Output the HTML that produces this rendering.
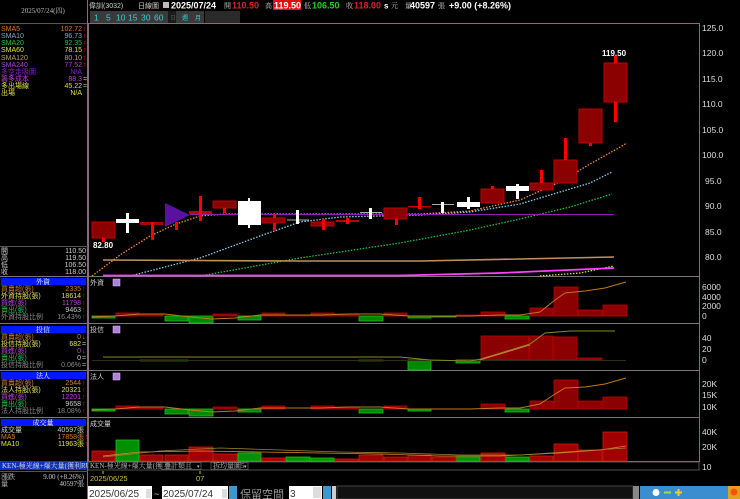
<!DOCTYPE html>
<html><head><meta charset="utf-8"><style>
html,body{margin:0;padding:0;background:#000;width:740px;height:499px;overflow:hidden}
svg{display:block}
text{font-family:"Liberation Sans","Noto Sans CJK TC",sans-serif}
.s{font-size:7px}
.m{font-family:"Liberation Serif","Noto Serif CJK SC",serif;font-size:7px}
.ax{font-family:"Liberation Serif",serif;font-size:8.5px;fill:#ddd}
</style></head><body>
<svg width="740" height="499" viewBox="0 0 740 499" xmlns="http://www.w3.org/2000/svg">
<rect width="740" height="499" fill="#000"/>
<text x="43" y="13" class="m" fill="#bbb" text-anchor="middle">2025/07/24(四)</text>
<line x1="0" y1="23.5" x2="88" y2="23.5" stroke="#555"/>
<line x1="87.5" y1="0" x2="87.5" y2="499" stroke="#8a6a7a"/>
<g class="m">
<text x="1" y="31" fill="#d08030">SMA5</text><text x="82" y="31" fill="#d08030" text-anchor="end">102.72</text>
<text x="1" y="38" fill="#80a8c8">SMA10</text><text x="82" y="38" fill="#80a8c8" text-anchor="end">96.73</text>
<text x="1" y="45" fill="#20c040">SMA20</text><text x="82" y="45" fill="#20c040" text-anchor="end">92.35</text>
<text x="1" y="52" fill="#e0e060">SMA60</text><text x="82" y="52" fill="#e0e060" text-anchor="end">78.15</text>
<text x="1" y="60" fill="#c0a070">SMA120</text><text x="82" y="60" fill="#c0a070" text-anchor="end">80.10</text>
<text x="1" y="67" fill="#b040d0">SMA240</text><text x="82" y="67" fill="#b040d0" text-anchor="end">77.52</text>
<text x="1" y="74" fill="#8020d0">多空走吸圖</text><text x="82" y="74" fill="#8020d0" text-anchor="end">N/A</text>
<text x="1" y="81" fill="#c040e0">籌多成本</text><text x="82" y="81" fill="#c040e0" text-anchor="end">88.3</text>
<text x="1" y="88" fill="#e0e040">多出場線</text><text x="82" y="88" fill="#e0e040" text-anchor="end">45.22</text>
<text x="1" y="95" fill="#e0e040">出場</text><text x="82" y="95" fill="#e0e040" text-anchor="end">N/A</text>
<g fill="#f00"><text x="83" y="31">↑</text><text x="83" y="38">↑</text><text x="83" y="45">↑</text><text x="83" y="52">↑</text><text x="83" y="60">↑</text><text x="83" y="67">↑</text></g>
<text x="83" y="81" fill="#bbb">=</text><text x="83" y="88" fill="#bbb">=</text>
</g>
<line x1="0" y1="246.5" x2="88" y2="246.5" stroke="#555"/>
<g class="m" fill="#ccc">
<text x="1" y="253">開</text><text x="86" y="253" text-anchor="end">110.50</text>
<text x="1" y="260">高</text><text x="86" y="260" text-anchor="end">119.50</text>
<text x="1" y="267">低</text><text x="86" y="267" text-anchor="end">106.50</text>
<text x="1" y="274">收</text><text x="86" y="274" text-anchor="end">118.00</text>
</g>
<line x1="0" y1="276.5" x2="88" y2="276.5" stroke="#777"/>
<rect x="1" y="278" width="85" height="7" fill="#0018ff"/>
<text x="43" y="284" class="m" fill="#fff" text-anchor="middle">外資</text>
<g class="m">
<text x="1" y="291" fill="#d08030">買賣超(張)</text><text x="81" y="291" fill="#d08030" text-anchor="end">2335</text>
<text x="1" y="298" fill="#e0e060">外資持股(張)</text><text x="81" y="298" fill="#e0e060" text-anchor="end">18614</text>
<text x="1" y="305" fill="#c040e0">買進(張)</text><text x="81" y="305" fill="#c040e0" text-anchor="end">11798</text>
<text x="1" y="312" fill="#20c040">賣出(張)</text><text x="81" y="312" fill="#ccc" text-anchor="end">9463</text>
<text x="1" y="319" fill="#888">外資持股比例</text><text x="81" y="319" fill="#888" text-anchor="end">16.43%</text>
<g fill="#f00"><text x="82" y="291">↑</text><text x="82" y="298">↑</text><text x="82" y="305">↑</text><text x="82" y="312">↑</text><text x="82" y="319">↑</text></g>
</g>
<line x1="0" y1="323.5" x2="88" y2="323.5" stroke="#777"/>
<rect x="1" y="326" width="85" height="7" fill="#0018ff"/>
<text x="43" y="332" class="m" fill="#fff" text-anchor="middle">投信</text>
<g class="m">
<text x="1" y="339" fill="#d08030">買賣超(張)</text><text x="81" y="339" fill="#d08030" text-anchor="end">0</text>
<text x="1" y="346" fill="#e0e060">投信持股(張)</text><text x="81" y="346" fill="#e0e060" text-anchor="end">682</text>
<text x="1" y="353" fill="#c040e0">買進(張)</text><text x="81" y="353" fill="#c040e0" text-anchor="end">0</text>
<text x="1" y="360" fill="#20c040">賣出(張)</text><text x="81" y="360" fill="#ccc" text-anchor="end">0</text>
<text x="1" y="367" fill="#888">投信持股比例</text><text x="81" y="367" fill="#888" text-anchor="end">0.06%</text>
<text x="82" y="339" fill="#0c0">↓</text><text x="82" y="346" fill="#bbb">=</text><text x="82" y="353" fill="#0c0">↓</text><text x="82" y="360" fill="#bbb">=</text><text x="82" y="367" fill="#bbb">=</text>
</g>
<line x1="0" y1="370.5" x2="88" y2="370.5" stroke="#777"/>
<rect x="1" y="372" width="85" height="7" fill="#0018ff"/>
<text x="43" y="378" class="m" fill="#fff" text-anchor="middle">法人</text>
<g class="m">
<text x="1" y="385" fill="#d08030">買賣超(張)</text><text x="81" y="385" fill="#d08030" text-anchor="end">2544</text>
<text x="1" y="392" fill="#e0e060">法人持股(張)</text><text x="81" y="392" fill="#e0e060" text-anchor="end">20321</text>
<text x="1" y="399" fill="#c040e0">買進(張)</text><text x="81" y="399" fill="#c040e0" text-anchor="end">12201</text>
<text x="1" y="406" fill="#20c040">賣出(張)</text><text x="81" y="406" fill="#ccc" text-anchor="end">9658</text>
<text x="1" y="413" fill="#888">法人持股比例</text><text x="81" y="413" fill="#888" text-anchor="end">18.08%</text>
<g fill="#f00"><text x="82" y="385">↑</text><text x="82" y="392">↑</text><text x="82" y="399">↑</text><text x="82" y="406">↑</text><text x="82" y="413">↑</text></g>
</g>
<line x1="0" y1="417.5" x2="88" y2="417.5" stroke="#777"/>
<rect x="1" y="419" width="85" height="7" fill="#0018ff"/>
<text x="43" y="425" class="m" fill="#fff" text-anchor="middle">成交量</text>
<g class="m">
<text x="1" y="432" fill="#ccc">成交量</text><text x="84" y="432" fill="#ccc" text-anchor="end">40597張</text>
<text x="1" y="439" fill="#d08030">MA5</text><text x="84" y="439" fill="#d08030" text-anchor="end">17858張</text>
<text x="1" y="446" fill="#e0e060">MA10</text><text x="84" y="446" fill="#e0e060" text-anchor="end">11963張</text>
<text x="85" y="439" fill="#f00">↑</text><text x="85" y="446" fill="#f00">↑</text>
</g>
<rect x="0" y="461" width="87" height="9" fill="#1030c0"/>
<text x="2" y="468" class="m" fill="#ddd">KEN-極光線+爆大量(獲利RUP)</text>
<line x1="0" y1="471.5" x2="88" y2="471.5" stroke="#555"/>
<text x="1" y="479" class="m" fill="#ccc">漲跌</text><text x="84" y="479" class="m" fill="#ccc" text-anchor="end">9.00 (+8.26%)</text>
<text x="1" y="486" class="m" fill="#ccc">量</text><text x="84" y="486" class="m" fill="#ccc" text-anchor="end">40597張</text>

<g class="m" fill="#ccc">
<text x="89" y="8">偉訓(3032)</text>
<text x="138" y="8">日線圖</text>
</g>
<rect x="163" y="2" width="6" height="6" fill="#bbb"/>
<text x="171" y="8.5" font-size="9" font-weight="bold" fill="#fff">2025/07/24</text>
<text x="224" y="8" class="m" fill="#ccc">開</text>
<text x="232" y="8.5" font-size="9" font-weight="bold" fill="#e02020">110.50</text>
<text x="265" y="8" class="m" fill="#ccc">高</text>
<rect x="273" y="0" width="28" height="10" fill="#e01010"/>
<text x="274" y="8.5" font-size="9" font-weight="bold" fill="#fff">119.50</text>
<text x="304" y="8" class="m" fill="#ccc">低</text>
<text x="312" y="8.5" font-size="9" font-weight="bold" fill="#20d020">106.50</text>
<text x="346" y="8" class="m" fill="#ccc">收</text>
<text x="354" y="8.5" font-size="9" font-weight="bold" fill="#e02020">118.00</text>
<text x="384" y="8.5" font-size="8" font-weight="bold" fill="#fff">s</text>
<text x="391" y="8" class="m" fill="#ccc">元　量</text>
<text x="410" y="8.5" font-size="9" font-weight="bold" fill="#fff">40597</text>
<text x="438" y="8" class="m" fill="#ccc">張</text>
<text x="449" y="8.5" font-size="9" font-weight="bold" fill="#fff">+9.00 (+8.26%)</text>
<g font-size="8.5" font-family="Liberation Serif,serif" fill="#30d0e0">
<rect x="90" y="11" width="114" height="12" fill="#3a3a3a"/>
<rect x="205" y="11" width="35" height="12" fill="#2a2a2a"/>
<rect x="168" y="11" width="8" height="12" fill="#1a1a1a"/>
<text x="94" y="20.5">1</text><text x="106" y="20.5">5</text><text x="116" y="20.5">10</text><text x="128" y="20.5">15</text><text x="141" y="20.5">30</text><text x="154" y="20.5">60</text>
<text x="170" y="20" font-size="6" fill="#555">日</text><text x="182" y="20" font-size="6" fill="#30d0e0">週</text><text x="195" y="20" font-size="6" fill="#30d0e0">月</text>
</g>
<rect x="88.5" y="23.5" width="611" height="438" fill="none" stroke="#8a6a7a"/>
<g stroke="#777"><line x1="88" y1="276.5" x2="700" y2="276.5"/><line x1="88" y1="323.5" x2="700" y2="323.5"/><line x1="88" y1="370.5" x2="700" y2="370.5"/><line x1="88" y1="417.5" x2="700" y2="417.5"/></g>
<g class="ax">
<text x="702" y="31">125.0</text><text x="702" y="56">120.0</text><text x="702" y="82">115.0</text><text x="702" y="107">110.0</text><text x="702" y="133">105.0</text><text x="702" y="158">100.0</text><text x="705" y="184">95.0</text><text x="705" y="209">90.0</text><text x="705" y="235">85.0</text><text x="705" y="260">80.0</text>
<text x="702" y="290">6000</text><text x="702" y="300">4000</text><text x="702" y="309">2000</text><text x="702" y="319">0</text>
<text x="702" y="341">40</text><text x="702" y="352">20</text><text x="702" y="363">0</text>
<text x="702" y="387">20K</text><text x="702" y="398">15K</text><text x="702" y="410">10K</text>
<text x="702" y="435">40K</text><text x="702" y="450">20K</text><text x="702" y="470">10</text>
</g>
<g fill="none" stroke-width="1.3" stroke-dasharray="1.5 1.5">
<polyline stroke="#f09030" points="92,276 120,255 150,236 176,224 200,216 225,214 300,214 420,214 470,211 520,200 560,182 590,164 615,150 627,143"/>
<polyline stroke="#80d0f0" points="130,276 200,258 260,236 300,222 340,217 420,215 470,212 520,204 560,192 590,183 612,172"/>
<polyline stroke="#20c040" points="200,276 300,258 400,243 470,230 520,219 570,207 612,194"/>
<polyline stroke="#e0e040" points="540,276 580,273 614,266"/>
</g>
<line x1="190" y1="214.5" x2="614" y2="214.5" stroke="#9020b0"/>
<polyline fill="none" stroke="#c09060" stroke-width="1.6" points="103,260 300,261 420,261 520,259 614,257"/>
<polyline fill="none" stroke="#ff40ff" stroke-width="1.8" points="103,275.5 400,275.5 500,273 614,268"/>
<g stroke="#c00000">
<rect x="92" y="222" width="23" height="16" fill="#8b0000"/>
<rect x="213" y="201" width="23" height="7" fill="#8b0000"/>
<rect x="262" y="218" width="23" height="5" fill="#8b0000"/>
<rect x="311" y="222" width="23" height="4" fill="#8b0000"/>
<rect x="384" y="208" width="23" height="11" fill="#8b0000"/>
<rect x="481" y="189" width="23" height="14" fill="#8b0000"/>
<rect x="530" y="183" width="23" height="7" fill="#8b0000"/>
<rect x="554" y="160" width="23" height="23" fill="#8b0000"/>
<rect x="579" y="109" width="23" height="34" fill="#8b0000"/>
<rect x="604" y="63" width="23" height="39" fill="#8b0000"/>
</g>
<g fill="#ff0000">
<rect x="102" y="238" width="3" height="4"/>
<rect x="140" y="222" width="23" height="3" fill="#b00000"/><rect x="151" y="222" width="3" height="18"/>
<rect x="175" y="222" width="3" height="8"/>
<rect x="189" y="211" width="23" height="3" fill="#c00000"/><rect x="199" y="196" width="3" height="25"/>
<rect x="223" y="208" width="3" height="5"/>
<rect x="273" y="214" width="3" height="4"/><rect x="273" y="223" width="3" height="8"/>
<rect x="322" y="219" width="3" height="11"/>
<rect x="336" y="220" width="23" height="2" fill="#c00000"/><rect x="346" y="218" width="3" height="6"/>
<rect x="395" y="219" width="3" height="6"/>
<rect x="408" y="206" width="23" height="1.5" fill="#c00000"/><rect x="418" y="197" width="3" height="12"/>
<rect x="491" y="186" width="3" height="3"/>
<rect x="540" y="170" width="3" height="13"/>
<rect x="564" y="138" width="3" height="22"/>
<rect x="589" y="143" width="3" height="3"/>
<rect x="614" y="56" width="3" height="7"/><rect x="614" y="102" width="3" height="20"/>
</g>
<polygon points="165,203 165,227 190,215" fill="#5a10a0"/>
<g fill="#fff">
<rect x="116" y="219" width="23" height="4"/><rect x="126" y="213" width="3" height="20"/>
<rect x="238" y="201" width="23" height="24"/><rect x="248" y="198" width="2" height="30"/>
<rect x="287" y="219.5" width="22" height="1" fill="#aaa"/><rect x="296" y="210" width="3" height="14"/>
<rect x="360" y="212" width="22" height="1" fill="#aaa"/><rect x="369" y="208" width="3" height="11"/>
<rect x="432" y="204" width="22" height="1" fill="#aaa"/><rect x="441" y="202" width="3" height="11"/>
<rect x="457" y="202" width="23" height="5"/><rect x="467" y="197" width="3" height="12"/>
<rect x="506" y="186" width="23" height="5"/><rect x="516" y="184" width="3" height="15"/>
</g>
<text x="93" y="248" font-size="8" font-weight="bold" fill="#fff">82.80</text>
<text x="602" y="56" font-size="8" font-weight="bold" fill="#fff">119.50</text>
<g class="m" fill="#ccc"><text x="90" y="285">外資</text><text x="90" y="332">投信</text><text x="90" y="379">法人</text><text x="90" y="426">成交量</text></g>
<g fill="#b080e0" stroke="#e0c0ff" stroke-width="0.5"><rect x="113" y="279" width="7" height="7"/><rect x="113" y="326" width="7" height="7"/><rect x="113" y="373" width="7" height="7"/></g>
<g stroke-width="0.8">
<g fill="#008800" stroke="#20c020">
<rect x="92" y="316" width="23" height="2"/><rect x="165" y="316" width="23" height="5"/><rect x="189" y="316" width="24" height="7"/><rect x="238" y="316" width="23" height="4"/><rect x="359" y="316" width="24" height="5"/><rect x="408" y="316" width="23" height="2"/><rect x="432" y="316" width="24" height="1"/><rect x="505" y="316" width="24" height="3"/>
</g>
<g fill="#8b0000" stroke="#c00000">
<rect x="116" y="313" width="23" height="3"/><rect x="140" y="314" width="23" height="2"/><rect x="213" y="314" width="24" height="2"/><rect x="262" y="313" width="23" height="3"/><rect x="286" y="315" width="24" height="1"/><rect x="311" y="313" width="23" height="3"/><rect x="335" y="314" width="24" height="2"/><rect x="384" y="313" width="23" height="3"/><rect x="456" y="315" width="24" height="1"/><rect x="481" y="312" width="24" height="4"/><rect x="530" y="308" width="23" height="8"/><rect x="554" y="287" width="24" height="29"/><rect x="578" y="310" width="24" height="6"/><rect x="603" y="305" width="24" height="11"/>
</g>
</g>
<polyline fill="none" stroke="#c07820" stroke-width="1" points="92,317 115,316 140,314 165,314 190,317 212,319 235,318 260,315 290,315 320,315 350,314 380,314 410,316 440,316 470,316 500,315 520,315 540,312 555,300 565,293 585,291 605,288 626,282"/>
<g stroke-width="0.8">
<g fill="#006000" stroke="#108010"><rect x="140" y="360" width="48" height="1"/><rect x="359" y="360" width="24" height="1"/></g>
<g fill="#008800" stroke="#20c020"><rect x="408" y="360" width="23" height="10"/><rect x="456" y="360" width="24" height="3"/></g>
<g fill="#8b0000" stroke="#c00000"><rect x="481" y="336" width="48" height="24"/><rect x="529" y="336" width="24" height="24"/><rect x="553" y="337" width="24" height="23"/><rect x="578" y="358" width="24" height="2"/></g>
</g>
<line x1="92" y1="360.5" x2="626" y2="360.5" stroke="#303010"/>
<polyline fill="none" stroke="#8a8a20" stroke-width="1" points="103,357 400,357 430,360 470,361 481,359 530,344 545,333 570,331 615,331"/>
<polyline fill="none" stroke="#e08030" stroke-width="0.8" points="480,360 530,345"/>
<g stroke-width="0.8">
<g fill="#008800" stroke="#20c020">
<rect x="92" y="409" width="23" height="2"/><rect x="165" y="409" width="23" height="5"/><rect x="189" y="409" width="24" height="7"/><rect x="238" y="409" width="23" height="3"/><rect x="359" y="409" width="24" height="4"/><rect x="408" y="409" width="23" height="2"/><rect x="505" y="409" width="24" height="3"/>
</g>
<g fill="#8b0000" stroke="#c00000">
<rect x="116" y="406" width="23" height="3"/><rect x="140" y="407" width="23" height="2"/><rect x="213" y="407" width="24" height="2"/><rect x="262" y="406" width="23" height="3"/><rect x="311" y="406" width="23" height="3"/><rect x="335" y="407" width="24" height="2"/><rect x="384" y="406" width="23" height="3"/><rect x="481" y="404" width="24" height="5"/><rect x="530" y="401" width="23" height="8"/><rect x="554" y="380" width="24" height="29"/><rect x="578" y="401" width="24" height="8"/><rect x="603" y="397" width="24" height="12"/>
</g>
</g>
<polyline fill="none" stroke="#c07820" stroke-width="1" points="92,410 115,409 140,407 165,407 190,410 212,412 235,411 260,408 290,408 320,408 350,407 380,407 410,409 440,409 470,409 500,408 520,408 540,404 555,394 565,388 585,387 605,384 626,378"/>
<g stroke-width="0.8">
<g fill="#009000" stroke="#20c020"><rect x="116" y="440" width="23" height="21"/><rect x="238" y="453" width="23" height="8"/><rect x="286" y="457" width="24" height="4"/><rect x="311" y="458" width="23" height="3"/><rect x="456" y="457" width="24" height="4"/><rect x="505" y="457" width="24" height="4"/></g>
<g fill="#a00000" stroke="#d02000"><rect x="92" y="451" width="23" height="10"/><rect x="140" y="455" width="23" height="6"/><rect x="165" y="455" width="23" height="6"/><rect x="189" y="447" width="24" height="14"/><rect x="213" y="454" width="24" height="7"/><rect x="262" y="458" width="23" height="3"/><rect x="335" y="459" width="24" height="2"/><rect x="359" y="455" width="24" height="6"/><rect x="384" y="457" width="23" height="4"/><rect x="408" y="455" width="23" height="6"/><rect x="432" y="457" width="24" height="4"/><rect x="481" y="453" width="24" height="8"/><rect x="530" y="456" width="23" height="5"/><rect x="554" y="444" width="24" height="17"/><rect x="578" y="450" width="24" height="11"/><rect x="603" y="432" width="24" height="29"/></g>
</g>
<polyline fill="none" stroke="#e08030" stroke-width="0.8" points="103,456 140,452 200,451 260,452 320,453 380,454 440,456 500,456 560,453 600,450 626,446"/>
<polyline fill="none" stroke="#a08030" stroke-width="0.8" points="103,457 160,451 220,448 280,450 340,452 400,453 460,455 520,455 580,451 626,448"/>
<rect x="88" y="462" width="611" height="8" fill="#000" stroke="#666" stroke-width="0.8"/>
<text x="90" y="468" class="m" fill="#bbb" font-size="5">KEN-極光線+爆大量(獲利RUP)</text>
<rect x="162" y="462.5" width="39" height="7" fill="#000" stroke="#777" stroke-width="0.6"/><text x="164" y="468" font-size="6" class="m" fill="#bbb">疊計類且</text><text x="197" y="468" font-size="5" fill="#bbb">▾</text>
<rect x="211" y="462.5" width="37" height="7" fill="#000" stroke="#777" stroke-width="0.6"/><text x="213" y="468" font-size="6" class="m" fill="#bbb">拆均量圖5</text><text x="244" y="468" font-size="5" fill="#bbb">▾</text>
<line x1="103" y1="471" x2="103" y2="474" stroke="#cc0"/><line x1="200" y1="471" x2="200" y2="474" stroke="#cc0"/>
<text x="90" y="481" font-size="7.5" fill="#d0c040">2025/06/25</text>
<text x="196" y="481" font-size="7.5" fill="#d0c040">07</text>
<rect x="88" y="486" width="64" height="13" fill="#fff"/><text x="89" y="497" font-size="10" font-family="Liberation Serif,serif" fill="#333">2025/06/25</text><rect x="146" y="489" width="5" height="9" fill="#ddd"/>
<text x="154" y="497" font-size="9" fill="#ccc">~</text>
<rect x="162" y="486" width="66" height="13" fill="#fff"/><text x="163" y="497" font-size="10" font-family="Liberation Serif,serif" fill="#333">2025/07/24</text><rect x="222" y="489" width="5" height="9" fill="#ddd"/>
<rect x="229" y="486" width="8" height="13" fill="#3a9ad0"/>
<text x="240" y="498" font-size="11" font-family="Noto Sans CJK TC,sans-serif" fill="#999">保留空間</text>
<rect x="289" y="486" width="33" height="13" fill="#fff"/><text x="290" y="497" font-size="10" fill="#333">3</text><rect x="313" y="487" width="8" height="11" fill="#ddd"/>
<rect x="323" y="486" width="8" height="13" fill="#3a9ad0"/>
<rect x="332" y="486" width="4" height="13" fill="#ccc"/>
<rect x="337" y="486" width="296" height="13" fill="#111" stroke="#444"/>
<rect x="633" y="486" width="6" height="13" fill="#888"/>
<g fill="#3a8ed0"><rect x="640" y="486" width="11" height="13"/><rect x="651" y="486" width="11" height="13"/><rect x="662" y="486" width="11" height="13"/><rect x="673" y="486" width="11" height="13"/><rect x="684" y="486" width="11" height="13"/><rect x="695" y="486" width="11" height="13"/><rect x="706" y="486" width="11" height="13"/><rect x="717" y="486" width="11" height="13"/></g>
<circle cx="656" cy="492.5" r="3.5" fill="#fff"/><rect x="664" y="491.5" width="7" height="2" fill="#9fe040"/><rect x="675" y="491.5" width="7" height="2" fill="#f0d020"/><rect x="677.5" y="489" width="2" height="7" fill="#f0d020"/>
<rect x="728" y="486" width="12" height="13" fill="#e0a020"/><circle cx="734" cy="492" r="3.5" fill="#ff5010"/>
</svg>
</body></html>
